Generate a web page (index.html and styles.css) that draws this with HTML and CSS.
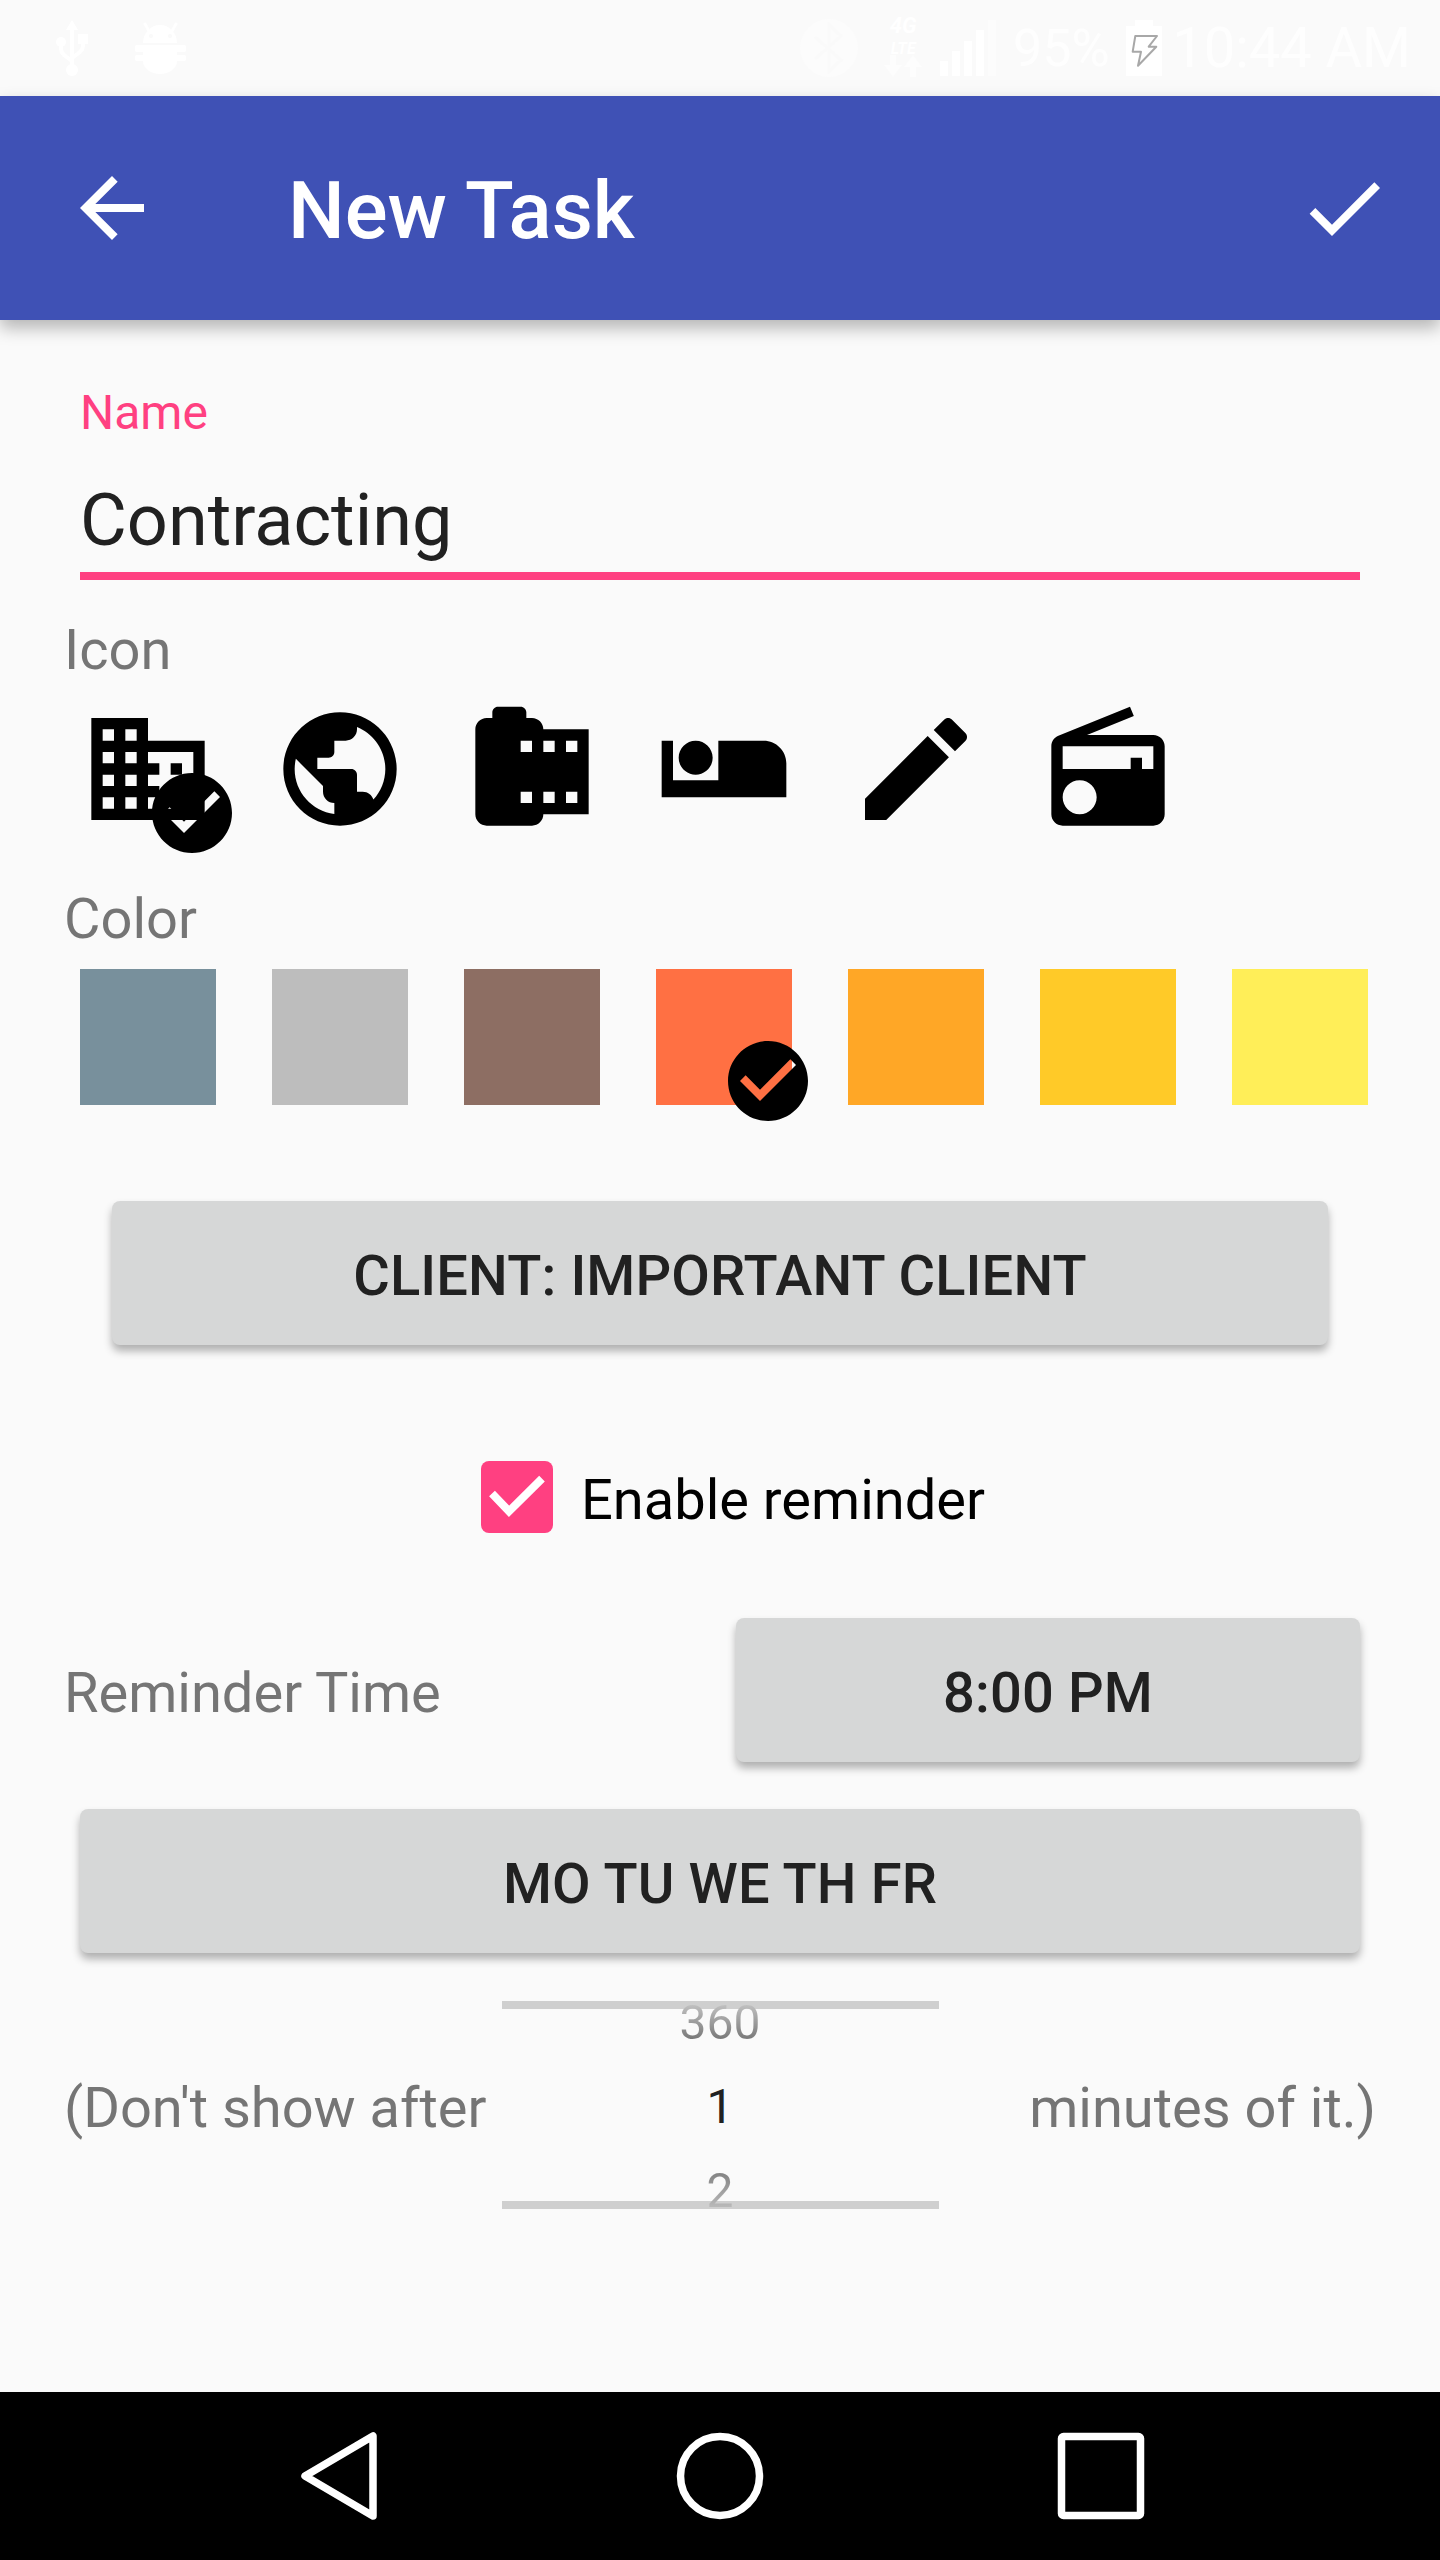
FILE: index.html
```html
<!DOCTYPE html>
<html lang="en">
<head>
    <meta charset="UTF-8">
    <meta name="viewport" content="width=device-width, initial-scale=1.0">
    <title>New Task</title>
    <link rel="stylesheet" href="styles.css">
</head>
<body>
    <div class="screen">
        <div class="status-bar">
            <div class="status-left">
                <svg class="status-usb" viewBox="0 0 32 56">
                    <path d="M16 0l6 10H10z" fill="#fff"/>
                    <path d="M16 8v40M5 22v7c0 3 1 4 3 6l8 6M27 22v4c0 3-1 4-3 6l-8 6" fill="none" stroke="#fff" stroke-width="4"/>
                    <circle cx="16" cy="50" r="6" fill="#fff"/>
                    <circle cx="5" cy="22" r="5" fill="#fff"/>
                    <rect x="22" y="14" width="10" height="10" fill="#fff"/>
                </svg>
                <svg class="status-android" viewBox="0 0 51 52">
                    <path d="M10 2l4 7M41 2l-4 7" fill="none" stroke="#fff" stroke-width="3" stroke-linecap="round"/>
                    <path d="M8 21a17 18 0 0 1 34 0z" fill="#fff"/>
                    <circle cx="16" cy="14" r="2" fill="#fafafa"/>
                    <circle cx="35" cy="14" r="2" fill="#fafafa"/>
                    <rect x="0" y="23" width="51" height="7" rx="2" fill="#fff"/>
                    <rect x="8" y="30" width="34" height="3" fill="#fff"/>
                    <rect x="0" y="33" width="51" height="6" rx="2" fill="#fff"/>
                    <path d="M8 39h34a17 13 0 0 1-34 0z" fill="#fff"/>
                </svg>
            </div>
            <div class="status-right">
                <svg class="status-bt" viewBox="0 0 58 58">
                    <circle cx="29" cy="29" r="29" fill="#fcfcfc"/>
                    <path d="M15 18l26 23-12 11V6l12 11-26 23" fill="none" stroke="#fafafa" stroke-width="3"/>
                </svg>
                <div class="status-net">
                    <span class="net-4g">4G</span>
                    <span class="net-lte">LTE</span>
                    <svg class="net-arrows" viewBox="0 0 38 22"><path d="M6 0h6v10h6l-9 12-9-12h6zM29 0l9 12h-6v10h-6V12h-6z"/></svg>
                </div>
                <div class="status-signal">
                    <span class="bar bar-1"></span>
                    <span class="bar bar-2"></span>
                    <span class="bar bar-3"></span>
                    <span class="bar bar-4"></span>
                    <span class="bar bar-5"></span>
                </div>
                <span class="status-pct">95%</span>
                <svg class="status-battery" viewBox="0 0 36 56">
                    <path d="M9 0h18v6h9v50H0V6h9z" fill="#fff"/>
                    <path d="M9.3 16H31l-8.3 10.7h7.6L12 45.7l3-14H6.7z" fill="#fff" stroke="#a8a8a8" stroke-width="2" stroke-linejoin="round"/>
                </svg>
                <span class="status-time">10:44 AM</span>
            </div>
        </div>

        <div class="app-bar">
            <svg class="app-bar-icon" viewBox="0 0 24 24"><path d="M20 11H7.83l5.59-5.59L12 4l-8 8 8 8 1.41-1.41L7.83 13H20v-2z"/></svg>
            <h1 class="app-bar-title">New Task</h1>
            <svg class="app-bar-icon" viewBox="0 0 24 24"><path d="M9 16.17L4.83 12l-1.42 1.41L9 19 21 7l-1.41-1.41z"/></svg>
        </div>

        <div class="content">
            <div class="name-field">
                <div class="name-label">Name</div>
                <div class="name-value">Contracting</div>
            </div>

            <div class="section-label icon-label">Icon</div>
            <div class="icon-row">
                <div class="icon-cell">
                    <svg class="task-icon" viewBox="0 0 24 24"><path d="M12 7V3H2v18h20V7H12zM6 19H4v-2h2v2zm0-4H4v-2h2v2zm0-4H4V9h2v2zm0-4H4V5h2v2zm4 12H8v-2h2v2zm0-4H8v-2h2v2zm0-4H8V9h2v2zm0-4H8V5h2v2zm10 12h-8v-2h2v-2h-2v-2h2v-2h-2V9h8v10zm-2-8h-2v2h2v-2zm0 4h-2v2h2v-2z"/></svg>
                    <svg class="picked-badge" viewBox="0 0 24 24"><path d="M12 2C6.48 2 2 6.48 2 12s4.48 10 10 10 10-4.48 10-10S17.52 2 12 2zm-2 15l-5-5 1.41-1.41L10 14.17l7.59-7.59L19 8l-9 9z"/></svg>
                </div>
                <div class="icon-cell">
                    <svg class="task-icon" viewBox="0 0 24 24"><path d="M12 2C6.48 2 2 6.48 2 12s4.48 10 10 10 10-4.48 10-10S17.52 2 12 2zm-1 17.93c-3.95-.49-7-3.85-7-7.93 0-.62.08-1.21.21-1.79L9 15v1c0 1.1.9 2 2 2v1.93zm6.9-2.54c-.26-.81-1-1.39-1.9-1.39h-1v-3c0-.55-.45-1-1-1H8v-2h2c.55 0 1-.45 1-1V7h2c1.1 0 2-.9 2-2v-.41c2.93 1.19 5 4.06 5 7.41 0 2.08-.8 3.97-2.1 5.39z"/></svg>
                </div>
                <div class="icon-cell">
                    <svg class="task-icon" viewBox="0 0 24 24"><path d="M14 5c0-1.1-.9-2-2-2h-1V2c0-.55-.45-1-1-1H6c-.55 0-1 .45-1 1v1H4c-1.1 0-2 .9-2 2v15c0 1.1.9 2 2 2h8c1.1 0 2-.9 2-2h8V5h-8zm-2 13h-2v-2h2v2zm0-9h-2V7h2v2zm4 9h-2v-2h2v2zm0-9h-2V7h2v2zm4 9h-2v-2h2v2zm0-9h-2V7h2v2z"/></svg>
                </div>
                <div class="icon-cell">
                    <svg class="task-icon" viewBox="0 0 24 24"><path d="M7 13c1.65 0 3-1.35 3-3S8.65 7 7 7s-3 1.35-3 3 1.35 3 3 3zm12-6h-8v7H3V7H1v10h22v-6c0-2.21-1.79-4-4-4z"/></svg>
                </div>
                <div class="icon-cell">
                    <svg class="task-icon" viewBox="0 0 24 24"><path d="M3 17.25V21h3.75L17.81 9.94l-3.75-3.75L3 17.25zM20.71 7.04c.39-.39.39-1.02 0-1.41l-2.34-2.34c-.39-.39-1.02-.39-1.41 0l-1.83 1.83 3.75 3.75 1.83-1.83z"/></svg>
                </div>
                <div class="icon-cell">
                    <svg class="task-icon" viewBox="0 0 24 24"><path d="M3.24 6.15C2.51 6.43 2 7.17 2 8v12c0 1.1.89 2 2 2h16c1.11 0 2-.9 2-2V8c0-1.11-.89-2-2-2H8.3l8.26-3.34L15.88 1 3.24 6.15zM7 20c-1.66 0-3-1.34-3-3s1.34-3 3-3 3 1.34 3 3-1.34 3-3 3zm13-8h-2v-2h-2v2H4V8h16v4z"/></svg>
                </div>
            </div>

            <div class="section-label color-label">Color</div>
            <div class="color-row">
                <div class="swatch swatch-blue-grey"></div>
                <div class="swatch swatch-grey"></div>
                <div class="swatch swatch-brown"></div>
                <div class="swatch swatch-deep-orange">
                    <svg class="picked-badge" viewBox="0 0 24 24"><path d="M12 2C6.48 2 2 6.48 2 12s4.48 10 10 10 10-4.48 10-10S17.52 2 12 2zm-2 15l-5-5 1.41-1.41L10 14.17l7.59-7.59L19 8l-9 9z"/></svg>
                </div>
                <div class="swatch swatch-orange"></div>
                <div class="swatch swatch-amber"></div>
                <div class="swatch swatch-yellow"></div>
            </div>

            <button class="raised-btn client-btn">CLIENT: IMPORTANT CLIENT</button>

            <div class="reminder-check">
                <span class="checkbox">
                    <svg viewBox="0 0 72 72"><path d="M11 32.5l17 17.8 33-32.6" fill="none" stroke="#fff" stroke-width="8"/></svg>
                </span>
                <span class="reminder-text">Enable reminder</span>
            </div>

            <div class="time-row">
                <span class="section-label">Reminder Time</span>
                <button class="raised-btn time-btn">8:00 PM</button>
            </div>

            <button class="raised-btn days-btn">MO TU WE TH FR</button>

            <div class="expire-row">
                <span class="section-label">(Don't show after</span>
                <div class="picker">
                    <div class="picker-value picker-prev">360</div>
                    <div class="picker-value picker-current">1</div>
                    <div class="picker-value picker-next">2</div>
                </div>
                <span class="section-label expire-end">minutes of it.)</span>
            </div>
        </div>

        <div class="nav-bar">
            <svg class="nav-icon" viewBox="0 0 88 88"><path d="M78 4v80L10 44z" fill="none" stroke="#fff" stroke-width="7.5" stroke-linejoin="round"/></svg>
            <svg class="nav-icon" viewBox="0 0 88 88"><circle cx="44" cy="44" r="39.5" fill="none" stroke="#fff" stroke-width="7.5"/></svg>
            <svg class="nav-icon" viewBox="0 0 88 88"><rect x="4.5" y="4.5" width="79" height="79" rx="2" fill="none" stroke="#fff" stroke-width="7.5"/></svg>
        </div>
    </div>
</body>
</html>
```

FILE: styles.css
```css
body {
    margin: 0;
    background-color: #fafafa;
    font-family: Roboto, "Liberation Sans", sans-serif;
}

.screen {
    display: flex;
    flex-direction: column;
    width: 1440px;
    height: 2560px;
    overflow: hidden;
}

.status-bar {
    display: flex;
    justify-content: space-between;
    align-items: center;
    height: 96px;
    color: #ffffff;
}

.status-left {
    display: flex;
    align-items: center;
    gap: 47px;
    margin-left: 56px;
}

.status-usb {
    width: 32px;
    height: 56px;
}

.status-android {
    width: 51px;
    height: 52px;
}

.status-right {
    display: flex;
    align-items: center;
    margin-right: 29px;
}

.status-bt {
    width: 58px;
    height: 58px;
    margin-right: 26px;
}

.status-net {
    display: flex;
    flex-direction: column;
    width: 38px;
    height: 64px;
    margin-right: 18px;
    margin-bottom: 6px;
    font-style: italic;
    font-weight: 700;
    text-align: center;
}

.net-4g {
    font-size: 22px;
    line-height: 26px;
}

.net-lte {
    font-size: 16px;
    line-height: 19px;
}

.net-arrows {
    width: 38px;
    height: 22px;
    margin-top: -3px;
    fill: #fdfdfd;
}

.status-signal {
    display: flex;
    align-items: flex-end;
    gap: 4px;
    height: 56px;
}

.bar {
    width: 8px;
    background-color: #ffffff;
}

.bar-1 { height: 15px; }
.bar-2 { height: 25px; }
.bar-3 { height: 35px; }
.bar-4 { height: 46px; }
.bar-5 { height: 56px; background-color: #fcfcfc; }

.status-pct {
    width: 130px;
    font-size: 52px;
    text-align: center;
    color: #fefefe;
}

.status-battery {
    width: 36px;
    height: 56px;
    margin-right: 10px;
}

.status-time {
    font-size: 56px;
    color: #fefefe;
}

.app-bar {
    position: relative;
    display: flex;
    align-items: center;
    height: 224px;
    padding: 0 48px 0 64px;
    background-color: #3f51b5;
    box-shadow: 0 8px 16px rgba(0, 0, 0, 0.28);
    fill: #ffffff;
}

.app-bar-icon {
    width: 96px;
    height: 96px;
}

.app-bar-title {
    flex: 1;
    margin: 0 0 0 128px;
    padding-top: 6px;
    font-size: 80px;
    font-weight: 500;
    color: #ffffff;
}

.content {
    flex: 1;
}

.name-field {
    width: 1280px;
    margin: 65px 0 0 80px;
    padding-bottom: 1px;
    border-bottom: 8px solid #ff4081;
}

.name-label {
    font-size: 48px;
    line-height: 56px;
    color: #ff4081;
}

.name-value {
    margin-top: 30px;
    font-size: 72px;
    line-height: 100px;
    color: #212121;
}

.section-label {
    font-size: 56px;
    line-height: 64px;
    color: #757575;
}

.icon-label {
    margin: 38px 0 0 64px;
}

.icon-row,
.color-row {
    display: flex;
    gap: 56px;
    margin-left: 80px;
}

.icon-row {
    margin-top: 19px;
}

.icon-cell {
    position: relative;
    width: 136px;
    height: 136px;
}

.task-icon {
    display: block;
    width: 136px;
    height: 136px;
}

.picked-badge {
    position: absolute;
    top: 64px;
    left: 64px;
    width: 96px;
    height: 96px;
}

.color-label {
    margin: 50px 0 0 64px;
}

.color-row {
    margin-top: 18px;
}

.swatch {
    position: relative;
    width: 136px;
    height: 136px;
}

.swatch-blue-grey { background-color: #78909c; }
.swatch-grey { background-color: #bdbdbd; }
.swatch-brown { background-color: #8d6e63; }
.swatch-deep-orange { background-color: #ff7043; }
.swatch-orange { background-color: #ffa726; }
.swatch-amber { background-color: #ffca28; }
.swatch-yellow { background-color: #ffee58; }

.raised-btn {
    display: block;
    height: 144px;
    padding: 6px 0 0;
    border: none;
    border-radius: 8px;
    background-color: #d6d7d7;
    box-shadow: 0 6px 8px rgba(0, 0, 0, 0.3);
    font-family: inherit;
    font-size: 56px;
    font-weight: 500;
    letter-spacing: 0.13px;
    color: #212121;
}

.client-btn {
    width: 1216px;
    margin: 96px 0 0 112px;
}

.reminder-check {
    display: flex;
    align-items: center;
    gap: 28px;
    margin: 116px 0 0 481px;
}

.checkbox {
    width: 72px;
    height: 72px;
    border-radius: 8px;
    background-color: #ff4081;
}

.checkbox svg {
    display: block;
}

.reminder-text {
    padding-top: 6px;
    font-size: 56px;
    color: #000000;
}

.time-row {
    display: flex;
    justify-content: space-between;
    align-items: center;
    margin: 85px 80px 0 64px;
}

.time-row .section-label,
.expire-row .section-label {
    padding-top: 5px;
}

.time-btn {
    width: 624px;
}

.days-btn {
    width: 1280px;
    margin: 47px 0 0 80px;
}

.expire-row {
    display: grid;
    grid-template-columns: 1fr 437px 1fr;
    align-items: center;
    margin: 48px 64px 0;
}

.expire-end {
    text-align: right;
}

.picker {
    height: 192px;
    border-top: 8px solid #cfcfcf;
    border-bottom: 8px solid #cfcfcf;
    text-align: center;
}

.picker-value {
    height: 84px;
    font-size: 48px;
    line-height: 88px;
}

.picker-prev,
.picker-next {
    background-clip: text;
    -webkit-background-clip: text;
    color: transparent;
}

.picker-prev {
    margin-top: -30px;
    background-image: linear-gradient(to bottom, #c8c8c8 22px, #757575 62px);
}

.picker-current {
    color: #212121;
}

.picker-next {
    background-image: linear-gradient(to bottom, #808080 24px, #bcbcbc 62px);
}

.nav-bar {
    display: flex;
    justify-content: center;
    align-items: center;
    gap: 293px;
    height: 168px;
    background-color: #000000;
}

.nav-icon {
    width: 88px;
    height: 88px;
}
```
